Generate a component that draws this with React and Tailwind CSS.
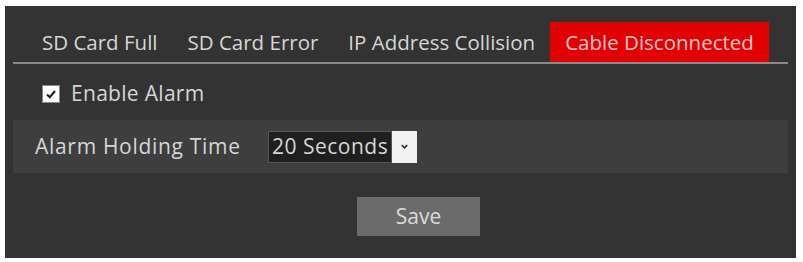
import React, { useState } from 'react';

const tabs = ['SD Card Full', 'SD Card Error', 'IP Address Collision', 'Cable Disconnected'];

const App = () => {
    const [active, setActive] = useState(3);
    const [enabled, setEnabled] = useState(true);

    return (
        <div className="w-[803px] h-[262px] bg-white pt-[6px] pl-[5px]" style={{ fontFamily: '"Open Sans", "Noto Sans", sans-serif' }}>
            <div className="w-[791px] h-[252px] bg-[#333333] px-2 flex flex-col text-[#d6d6d6]">
                {/* tabs */}
                <div className="mt-4 h-[42px] border-b-2 border-[#8a8a8a] flex pl-[14px]">
                    {tabs.map((t, i) => (
                        <button
                            key={t}
                            onClick={() => setActive(i)}
                            className={`h-10 px-[15px] text-[20.5px] leading-none whitespace-nowrap ${i === active ? 'bg-[#e30000] text-[#f0c8c8]' : ''}`}
                        >
                            {t}
                        </button>
                    ))}
                </div>

                {/* enable alarm */}
                <label className="h-[56px] pt-[3px] flex items-center gap-[11px] pl-[29px] text-[21px] cursor-pointer">
                    <span
                        onClick={() => setEnabled(!enabled)}
                        className="w-[18px] h-[18px] bg-white border border-[#888] flex items-center justify-center"
                    >
                        {enabled && (
                            <svg viewBox="0 0 12 12" className="w-3 h-3">
                                <path d="M2 6.5 L4.8 9.2 L10 3" fill="none" stroke="#222" strokeWidth="2.2" />
                            </svg>
                        )}
                    </span>
                    <span className="tracking-[0.3px]">Enable Alarm</span>
                </label>

                {/* holding time */}
                <div className="h-[53px] bg-[#3e3e3e] flex items-center pl-[22px] text-[21px]">
                    <span className="w-[233px] whitespace-nowrap tracking-[0.7px]">Alarm Holding Time</span>
                    <div className="flex items-stretch h-8">
                        <div className="w-[124px] bg-[#1f1f1f] border border-[#555] flex items-center pl-[3px] whitespace-nowrap tracking-[0.5px]">20 Seconds</div>
                        <div className="w-[25px] bg-[#f2f2f2] flex items-center justify-center">
                            <svg viewBox="0 0 10 10" className="w-[9px] h-[9px]">
                                <path d="M2 3.5 L5 6.5 L8 3.5" fill="none" stroke="#333" strokeWidth="2" />
                            </svg>
                        </div>
                    </div>
                </div>

                {/* save */}
                <div className="flex pl-[344px] pt-6">
                    <button className="w-[123px] h-[39px] bg-[#6b6b6b] text-[#dcdcdc] text-[21px]">Save</button>
                </div>
            </div>
        </div>
    );
};

export default App;
